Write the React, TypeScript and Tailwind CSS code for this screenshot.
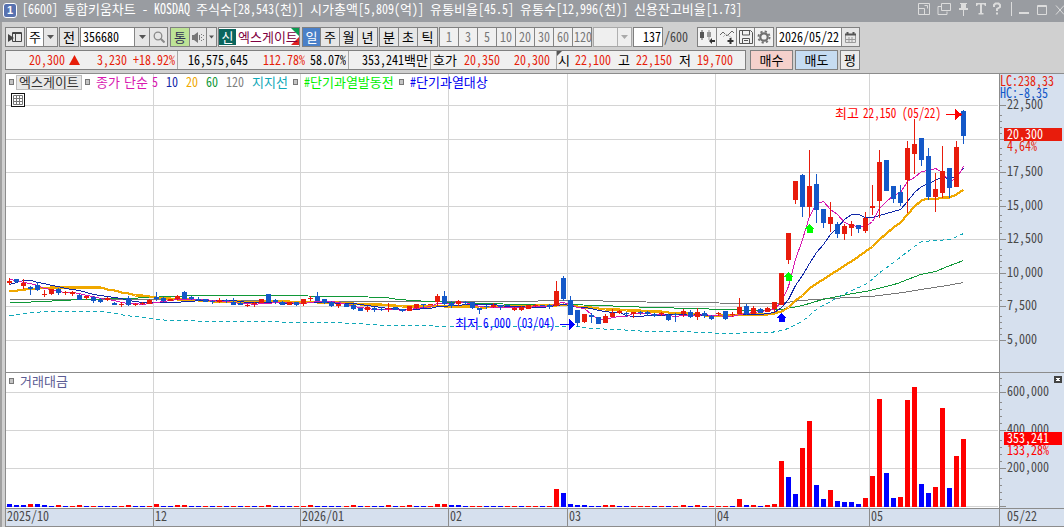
import type { ReactNode } from "react";
import { twMerge } from "tailwind-merge";

type Candle = [up: number, top: number, bottom: number, high: number, low: number];
type Point = [x: number, y: number];

// body top/bottom and wick high/low, in chart pixels
const CANDLES: Candle[] = [
    [1, 281, 283, 278, 285], [0, 279, 282, 279, 283], [1, 283, 286, 279, 289], [0, 287, 289, 286, 295],
    [0, 285, 290, 282, 291], [1, 294, 295, 290, 297], [1, 289, 294, 289, 295], [0, 289, 293, 288, 295],
    [1, 292, 293, 291, 295], [1, 292, 294, 291, 296], [0, 295, 300, 294, 300], [1, 296, 298, 296, 300],
    [0, 297, 301, 296, 303], [0, 300, 302, 298, 303], [1, 298, 300, 297, 301], [0, 303, 305, 302, 305],
    [1, 304, 305, 302, 307], [0, 298, 305, 296, 306], [1, 304, 305, 303, 306], [1, 303, 304, 302, 305],
    [1, 300, 304, 299, 304], [0, 297, 299, 292, 301], [0, 298, 301, 297, 302], [1, 299, 301, 299, 301],
    [1, 296, 299, 295, 300], [0, 292, 299, 291, 299], [0, 297, 299, 296, 300], [0, 299, 300, 297, 301],
    [0, 299, 302, 299, 302], [0, 301, 302, 300, 304], [1, 300, 302, 298, 303], [0, 300, 301, 299, 303],
    [0, 302, 305, 298, 305], [0, 303, 305, 302, 305], [1, 305, 306, 304, 307], [1, 303, 304, 302, 307],
    [1, 299, 303, 299, 303], [0, 294, 302, 294, 302], [0, 300, 302, 299, 304], [0, 302, 305, 301, 305],
    [1, 302, 305, 302, 305], [0, 302, 305, 302, 306], [1, 299, 304, 299, 306], [1, 298, 299, 296, 301],
    [0, 296, 301, 292, 301], [0, 299, 303, 299, 304], [0, 302, 306, 301, 307], [1, 304, 306, 304, 308],
    [0, 304, 307, 304, 307], [0, 305, 309, 304, 310], [0, 308, 311, 308, 311], [1, 307, 310, 306, 312],
    [0, 308, 310, 307, 312], [0, 309, 310, 307, 311], [1, 308, 309, 303, 312], [0, 307, 310, 307, 310],
    [0, 309, 311, 309, 312], [1, 306, 311, 306, 311], [1, 304, 308, 304, 309], [0, 304, 305, 304, 308],
    [1, 304, 305, 304, 305], [1, 296, 302, 294, 306], [0, 296, 304, 291, 305], [0, 303, 306, 301, 308],
    [1, 301, 304, 300, 306], [0, 302, 303, 301, 305], [0, 302, 308, 302, 309], [0, 308, 310, 308, 314],
    [0, 306, 307, 305, 309], [1, 305, 307, 303, 308], [0, 305, 307, 305, 310], [0, 305, 306, 305, 306],
    [1, 308, 310, 307, 311], [1, 307, 310, 306, 311], [1, 305, 309, 305, 309], [1, 305, 306, 304, 307],
    [0, 305, 306, 305, 306], [0, 305, 307, 304, 309], [1, 291, 306, 281, 306], [0, 278, 299, 276, 301],
    [0, 300, 315, 296, 315], [0, 310, 323, 310, 327], [1, 314, 322, 314, 323], [0, 315, 317, 313, 323],
    [0, 317, 324, 317, 324], [1, 316, 323, 314, 323], [1, 313, 317, 309, 317], [1, 311, 313, 310, 314],
    [0, 313, 314, 312, 317], [1, 312, 314, 312, 318], [0, 312, 313, 311, 315], [0, 312, 314, 311, 316],
    [0, 314, 316, 313, 317], [1, 313, 314, 312, 316], [0, 315, 320, 314, 321], [0, 314, 315, 313, 322],
    [1, 311, 314, 309, 317], [0, 312, 317, 310, 318], [1, 312, 317, 308, 320], [0, 313, 316, 311, 318],
    [0, 316, 319, 315, 320], [1, 313, 314, 312, 316], [0, 311, 319, 311, 320], [1, 314, 315, 312, 317],
    [1, 307, 314, 298, 314], [0, 306, 314, 304, 315], [1, 308, 314, 306, 314], [0, 309, 313, 308, 313],
    [1, 308, 312, 307, 312], [1, 302, 309, 302, 312], [1, 273, 305, 273, 305], [1, 233, 260, 233, 264],
    [1, 181, 200, 181, 204], [0, 175, 207, 174, 217], [1, 186, 207, 150, 217], [0, 184, 210, 174, 223],
    [0, 209, 223, 209, 228], [1, 217, 224, 202, 232], [0, 224, 234, 222, 238], [1, 226, 234, 224, 240],
    [1, 224, 228, 221, 236], [0, 225, 229, 225, 233], [1, 218, 231, 212, 233], [1, 206, 208, 185, 215],
    [1, 162, 201, 150, 218], [0, 160, 191, 160, 191], [0, 186, 199, 186, 203], [0, 192, 203, 185, 206],
    [1, 148, 180, 141, 213], [1, 144, 154, 119, 174], [0, 138, 160, 138, 166], [0, 156, 197, 148, 200],
    [1, 189, 197, 173, 212], [1, 171, 193, 146, 198], [0, 168, 188, 168, 198], [1, 147, 187, 141, 187],
    [0, 111, 136, 110, 144],
];

// r = red bar, b = blue bar, followed by its height
const VOLUMES = (
    "b3 b2 b2 r3 b3 b2 b1 r2 b1 r1 r2 b1 r1 b1 b1 b1 r1 r2 b1 b1 r1 r3 b1 b1 r2 r2 b1 b1 r1 b1 r1 b1 r1 b1 r1 b1 " +
    "r1 r2 b1 b1 b1 r1 r1 r2 b1 b1 b1 b1 r1 r2 b1 r1 b1 b1 r2 b1 r1 r2 b1 b1 r1 r3 r3 b2 b2 b1 r1 r1 b1 b1 b1 r1 " +
    "r1 b1 r1 r1 b1 r1 r18 b14 b3 b2 b2 b1 b1 r2 r2 b1 b1 r1 r1 r1 b1 r1 b1 r1 r2 b1 r2 b1 r1 r1 r1 b1 r8 b2 r2 " +
    "b1 r2 r3 r46 b30 b13 r59 r86 b22 b8 r17 b6 b5 b5 b3 r9 r31 r108 b34 b9 r10 r107 r120 b23 b14 r20 r99 b19 r51 r68"
).split(" ").map((v) => ({ up: v[0] === "r", h: Number(v.slice(1)) }));

const V_LINES = [153, 300, 448, 567, 715, 869];
const DATES: [number, string][] = [
    [7, "2025/10"], [155, "12"], [302, "2026/01"], [450, "02"], [569, "03"], [717, "04"], [871, "05"], [1007, "05/22"],
];
const PRICES: [number, string][] = [
    [105, "22,500"], [139, ""], [172, "17,500"], [206, "15,000"], [239, "12,500"], [273, "10,000"], [306, "7,500"], [340, "5,000"],
];
const AMOUNTS: [number, string][] = [[392, "600,000"], [430, "400,000"], [468, "200,000"], [506, ""]];

const xAt = (i: number) => 9 + i * 7 + Math.floor(i / 48);
const closes = CANDLES.map(([up, top, bottom]) => (up ? top : bottom));

function average(period: number, lead: Point[]): Point[] {
    const rest = closes.slice(period - 1).map((_, k): Point => {
        const sum = closes.slice(k, k + period).reduce((a, b) => a + b, 0);
        return [xAt(k + period - 1), sum / period];
    });
    return [...lead, ...rest];
}

const MA5 = average(5, [[9, 279], [16, 280], [23, 282], [30, 283]]);
const MA10 = average(10, [[9, 284], [16, 282], [23, 280], [31, 280], [37, 282], [44, 283], [51, 285], [58, 286], [65, 288]]);
const MA20 = average(20, [[9, 291], [17, 290], [24, 289], [37, 288], [51, 287], [100, 287], [107, 289], [114, 290], [121, 292], [128, 293], [135, 295]]);
const MA60: Point[] = [
    [9, 302], [20, 302], [41, 301], [62, 300], [80, 299], [125, 298], [150, 297], [167, 296], [202, 295], [265, 295],
    [350, 296], [385, 297], [398, 299], [413, 300], [427, 301], [457, 302], [482, 303], [523, 304], [563, 304],
    [602, 305], [623, 306], [653, 307], [693, 308], [723, 309], [757, 310], [781, 309], [802, 305], [822, 299],
    [847, 294], [870, 290], [897, 283], [920, 274], [935, 271], [947, 266], [963, 260],
];
const MA120: Point[] = [
    [9, 299], [167, 299], [290, 301], [523, 301], [553, 300], [602, 300], [603, 301], [687, 302], [750, 303],
    [780, 303], [800, 300], [830, 298], [870, 296], [903, 292], [920, 289], [947, 285], [963, 282],
];
const SUPPORT: Point[] = [
    [9, 315], [17, 314], [30, 312], [50, 311], [100, 311], [110, 312], [125, 315], [143, 317], [157, 319], [170, 320],
    [225, 321], [330, 322], [357, 323], [387, 325], [423, 325], [447, 326], [577, 326], [590, 328], [617, 329],
    [647, 331], [683, 331], [700, 332], [723, 333], [757, 332], [770, 332], [782, 330], [790, 327], [803, 320],
    [817, 308], [830, 301], [847, 292], [867, 283], [878, 273], [893, 262], [910, 249], [921, 241], [950, 239], [963, 233],
];

const toPoints = (pts: Point[]) => pts.map(([x, y]) => `${x + 0.5},${Math.round(y) + 0.5}`).join(" ");

const isWide = (s: string) => /[\uac00-\ud7a3]/.test(s);

// Fixed cell text: 12px for a Hangul syllable, 6px for anything else
function Cells({ children, className = "" }: { children: string; className?: string }) {
    const runs = children.match(/[\uac00-\ud7a3]+|[^\uac00-\ud7a3]+/g) ?? [];
    return (
        <span
            className={`inline-flex h-[14px] shrink-0 items-center whitespace-pre font-['Noto_Sans_CJK_KR',sans-serif] leading-[14px] ${className}`}
        >
            {runs.map((run, i) =>
                isWide(run) ? (
                    <span key={i} className="text-[13px]" style={{ width: run.length * 12 }}>
                        {run}
                    </span>
                ) : (
                    <span key={i} className="mb-[2px] text-[14px] [font-feature-settings:'hwid']" style={{ width: run.length * 6 }}>
                        <span className="inline-block origin-left scale-x-[0.857]">{run}</span>
                    </span>
                )
            )}
        </span>
    );
}

type AxisTextProps = { x: number; y: number; fill?: string; width?: number; children: string };

function AxisText({ x, y, fill = "#484848", width, children }: AxisTextProps) {
    if (isWide(children)) {
        return (
            <text x={x} y={y} fill={fill} textLength={children.length * 12} className="font-['Noto_Sans_CJK_KR',sans-serif] text-[13px]">
                {children}
            </text>
        );
    }
    return (
        <text
            x={x}
            y={y}
            fill={fill}
            textLength={width ?? children.length * 6}
            lengthAdjust="spacingAndGlyphs"
            className="font-['Noto_Sans_CJK_KR',sans-serif] text-[14px] [font-feature-settings:'hwid']"
        >
            {children}
        </text>
    );
}

function Box({ className = "", children }: { className?: string; children?: ReactNode }) {
    return (
        <div className={twMerge("flex h-full shrink-0 items-center justify-center border-r border-[#858585] last:border-r-0", className)}>
            {children}
        </div>
    );
}

function Group({ className = "", children }: { className?: string; children: ReactNode }) {
    return <div className={twMerge("flex h-5 shrink-0 overflow-hidden border border-[#808080] bg-[#e6e6e6]", className)}>{children}</div>;
}

function Down({ className = "fill-[#555]" }: { className?: string }) {
    return (
        <svg width="7" height="4" viewBox="0 0 7 4" className={className}>
            <path d="M0 0h7L3.5 4z" />
        </svg>
    );
}

function TitleBar() {
    return (
        <div className="flex h-[22px] shrink-0 items-center bg-[#999ca1] text-white">
            <div className="mb-[2px] ml-[3px] flex h-[15px] w-[14px] items-center justify-center rounded-[3px] border border-white bg-[#5872b0] font-['Liberation_Sans',sans-serif] text-[11px] font-bold">
                1
            </div>
            <Cells className="mb-[4px] ml-[5px]">
                [6600] 통합키움차트 - KOSDAQ 주식수[28,543(천)] 시가총액[5,809(억)] 유통비율[45.5] 유통수[12,996(천)] 신용잔고비율[1.73]
            </Cells>
            <svg width="150" height="22" viewBox="914 0 150 22" className="ml-auto shrink-0" fill="none" stroke="#dcdcdc">
                <path d="M918.5 3.500h11v11h-11zM918.5 8.500h6v6M924.500 5.500h3v3" />
                <path d="M941.500 3.500h9v7h-9zM941 6.500h-3v8h9v-3" />
                <path d="M960 3h7v1h-1v4h2v2h-4v6h-1v-6h-4V8h2V4h-1z" fill="#dcdcdc" stroke="none" />
                <path d="M976 3h10v3h-1l-1-1.500h-2V13h1.500v1.500h-5V13H980V4.500h-2L977 6h-1z" fill="#dcdcdc" stroke="none" />
                <path d="M994 7V5l1.500-1.500h3L1000 5v2l-3 2v2M997 12.500v2" strokeWidth="2" />
                <path d="M1011.500 2v14" />
                <path d="M1019 13h10" strokeWidth="2" />
                <path d="M1037.500 5.500h9v9h-9zM1037 6.500h10" />
                <path d="M1056 5.500l8 9M1056 14.500l8-9" />
            </svg>
        </div>
    );
}

function Toolbar() {
    return (
        <div className="ml-[5px] mt-[5px] flex h-5 shrink-0 text-black">
            <Group className="w-5 items-center justify-center">
                <svg width="15" height="14" fill="none" stroke="#444">
                    <path d="M4.500 2.500h9v9h-9zM4 3.500h10M7.500 3v9" />
                    <path d="M0 4l6 4-6 4z" fill="#444" stroke="none" />
                </svg>
            </Group>
            <Group className="ml-px w-8">
                <Box className="w-[17px] bg-white"><Cells>주</Cells></Box>
                <Box className="w-[13px]"><Down /></Box>
            </Group>
            <Group className="ml-px w-5 items-center justify-center"><Cells>전</Cells></Group>
            <Group className="ml-px w-[88px]">
                <Box className="w-[54px] justify-start bg-white pl-[2px]"><Cells>356680</Cells></Box>
                <Box className="w-[15px]"><Down /></Box>
                <Box className="w-[17px]">
                    <svg width="12" height="12" fill="none" stroke="#8a8a8a">
                        <circle cx="5" cy="5" r="3.800" strokeWidth="1.300" />
                        <path d="M7.700 7.700L11.500 11.500" strokeWidth="2" />
                    </svg>
                </Box>
            </Group>
            <Group className="ml-[2px] w-[47px]">
                <Box className="w-[19px] bg-[#bde396] text-[#335]"><Cells>통</Cells></Box>
                <Box className="w-[17px]">
                    <svg width="12" height="11" fill="#777">
                        <path d="M0 3h2l4-3v11L2 8H0z" />
                        <path d="M7 3h1v5H7zM9 2h1v1H9zM9 5h1v1H9zM9 8h1v1H9zM11 3h1v1h-1zM11 7h1v1h-1z" />
                    </svg>
                </Box>
                <Box className="w-[9px]"><Down className="w-[5px] fill-[#555]" /></Box>
            </Group>
            <Group className="relative ml-px w-[82px] items-center bg-white">
                <span className="mr-[2px] flex h-4 w-[17px] shrink-0 items-center justify-center bg-[#0a665e] text-white"><Cells>신</Cells></span>
                <svg width="8" height="17" className="absolute right-0 top-0">
                    <path d="M0 0h8v8z" fill="#0a9a50" />
                    <path d="M8 9v8H0z" fill="#e02020" />
                </svg>
                <Cells className="relative text-[#800040]">엑스게이트</Cells>
            </Group>
            <Group className="ml-[2px] w-[76px]">
                <Box className="w-[18px] bg-[#4a80c8] text-white"><Cells>일</Cells></Box>
                <Box className="w-[19px]"><Cells>주</Cells></Box>
                <Box className="w-[18px]"><Cells>월</Cells></Box>
                <Box className="w-[19px]"><Cells>년</Cells></Box>
            </Group>
            <Group className="ml-px w-[59px]">
                <Box className="w-[19px]"><Cells>분</Cells></Box>
                <Box className="w-[19px]"><Cells>초</Cells></Box>
                <Box className="w-[19px]"><Cells>틱</Cells></Box>
            </Group>
            <Group className="ml-px w-[153px] bg-[#f0f0f0] text-[#777]">
                {["1", "3", "5", "10", "20", "30", "60", "120"].map((m) => (
                    <Box key={m} className="w-[19px]"><Cells>{m}</Cells></Box>
                ))}
            </Group>
            <Group className="ml-px w-[39px] border-[#a8a8a8] bg-[#efefef]">
                <Box className="w-6 border-[#b0b0b0]" />
                <Box className="w-[13px]"><Down className="fill-[#aaa]" /></Box>
            </Group>
            <Group className="ml-px w-[30px] items-center justify-end bg-white pr-px"><Cells>137</Cells></Group>
            <div className="flex w-[34px] items-center pl-px text-[#444]"><Cells>/600</Cells></div>
            <Group className="w-[77px] bg-[#f2f2f2]">
                <Box className="w-[19px]">
                    <svg width="16" height="16" fill="#555">
                        <path d="M1 3h4v6H1zM2.500 1h1v10h-1z" />
                        <path d="M8 3h4v5H8zM9.500 1h1v10h-1z" fill="#999" />
                        <path d="M10 12l3-3v2h3v2h-3v2z" fill="#333" />
                    </svg>
                </Box>
                <Box className="w-[20px]">
                    <svg width="16" height="16" fill="none" stroke="#666">
                        <path d="M1 6l3-3 4 4 5-5 2 2" />
                        <path d="M4 8l3-3 6 4" stroke="#bbb" />
                        <path d="M11.500 9v6M8.500 12h6" stroke="#333" strokeWidth="2" />
                    </svg>
                </Box>
                <Box className="w-[18px]">
                    <svg width="14" height="14" fill="none" stroke="#555">
                        <path d="M.5.5h11l2 2v11H.500zM3.500 1v4h7V1M3.500 13V8.500h7V13M5 10.500h4" />
                    </svg>
                </Box>
                <Box className="w-[18px]">
                    <svg width="14" height="14" fill="none" stroke="#707070">
                        <circle cx="7" cy="7" r="3.700" strokeWidth="2.200" />
                        <circle cx="7" cy="7" r="5.600" strokeWidth="1.800" strokeDasharray="2.200 2.200" />
                    </svg>
                </Box>
            </Group>
            <Group className="ml-[2px] w-[84px]">
                <Box className="w-[65px] bg-white"><Cells>2026/05/22</Cells></Box>
                <Box className="w-[17px]">
                    <svg width="11" height="11" fill="none" stroke="#555">
                        <path d="M.5 2.500h10v8H.500zM4 5v5M7 5v5M1 7.500h9" stroke="#999" />
                        <path d="M0 2.500h11M2.500 0v2M8.500 0v2" strokeWidth="2" />
                    </svg>
                </Box>
            </Group>
        </div>
    );
}

function Quote() {
    return (
        <div className="ml-[5px] mt-[3px] flex h-5 shrink-0 text-black">
            <div className="flex w-[741px] shrink-0 items-center border border-[#808080] bg-[#f0f0f0] text-[#e61e0a]">
                <div className="flex h-full w-[172px] shrink-0 items-center border-r border-[#a8a8a8] pl-[23px]">
                    <Cells>20,300</Cells>
                    <svg width="11" height="10" className="ml-1 fill-[#e61e0a]">
                        <path d="M5.500 0L11 10H0z" />
                    </svg>
                    <Cells className="ml-[17px]">3,230</Cells>
                    <Cells className="ml-[6px]">+18.92%</Cells>
                </div>
                <div className="flex h-full w-[171px] shrink-0 items-center border-r border-[#a8a8a8] pl-[10px]">
                    <Cells className="text-black">16,575,645</Cells>
                    <Cells className="ml-[15px]">112.78%</Cells>
                    <Cells className="ml-[5px] text-black">58.07%</Cells>
                </div>
                <div className="flex h-full w-[82px] shrink-0 items-center border-r border-[#a8a8a8] pl-[13px] text-black">
                    <Cells>353,241백만</Cells>
                </div>
                <div className="flex h-full w-[126px] shrink-0 items-center border-r border-[#a8a8a8] pl-[2px]">
                    <Cells className="text-black">호가</Cells>
                    <Cells className="ml-[7px]">20,350</Cells>
                    <Cells className="ml-[14px]">20,300</Cells>
                </div>
                <div className="relative flex h-full items-center pl-px">
                    <svg width="5" height="5" className="absolute left-0 top-0 fill-[#555]">
                        <path d="M0 0h5L0 5z" />
                    </svg>
                    <Cells className="text-black">시</Cells>
                    <Cells className="ml-[5px]">22,100</Cells>
                    <Cells className="ml-[7px] text-black">고</Cells>
                    <Cells className="ml-[6px]">22,150</Cells>
                    <Cells className="ml-[7px] text-black">저</Cells>
                    <Cells className="ml-[6px]">19,700</Cells>
                </div>
            </div>
            <Group className="ml-1 w-[43px] items-center justify-center bg-[#f5d0cb]"><Cells>매수</Cells></Group>
            <Group className="ml-[2px] w-[43px] items-center justify-center bg-[#c6dcf2]"><Cells>매도</Cells></Group>
            <Group className="ml-[2px] w-5 items-center justify-center bg-[#ececec]"><Cells>평</Cells></Group>
        </div>
    );
}

function Marker({ className = "" }: { className?: string }) {
    return <span className={`h-[6px] w-[5px] shrink-0 border border-[#777] bg-[#c4c4c4] ${className}`} />;
}

function Legend() {
    return (
        <div className="absolute left-1 top-px flex h-[16px] items-center">
            <Marker />
            <span className="ml-[2px] flex h-[15px] w-[66px] items-center justify-center border border-[#bbb] bg-[#e8e8e8] text-[#333]">
                <Cells>엑스게이트</Cells>
            </span>
            <Marker className="ml-[3px]" />
            <Cells className="ml-[6px] text-[#d818b0]">종가</Cells>
            <Cells className="ml-[4px] text-[#d818b0]">단순</Cells>
            <Cells className="ml-[4px] text-[#d818b0]">5</Cells>
            <Cells className="ml-[8px] text-[#1028a8]">10</Cells>
            <Cells className="ml-[8px] text-[#f0a800]">20</Cells>
            <Cells className="ml-[8px] text-[#109838]">60</Cells>
            <Cells className="ml-[8px] text-[#808080]">120</Cells>
            <Cells className="ml-[8px] text-[#10a8b8]">지지선</Cells>
            <Marker className="ml-[5px]" />
            <Cells className="ml-[6px] text-[#00f000]">#단기과열발동전</Cells>
            <Marker className="ml-[5px]" />
            <Cells className="ml-[6px] text-[#0000f0]">#단기과열대상</Cells>
        </div>
    );
}

function UpArrow({ x, y, fill }: { x: number; y: number; fill: string }) {
    return <path d={`M${x + 0.5} ${y}l5 5h-2v4h-6v-4h-2z`} fill={fill} />;
}

function Chart() {
    return (
        <svg width="1059" height="454" viewBox="5 73 1059 454" className="block" shapeRendering="crispEdges">
            <rect x="5" y="73" width="994" height="436" fill="#fff" />
            <rect x="1000" y="74" width="64" height="453" fill="#d6e0ee" />
            <rect x="5" y="509" width="994" height="17" fill="#d6e0ee" />

            <g fill="#d4d4d4">
                {V_LINES.map((x) => <rect key={x} x={x} y="74" width="1" height="434" />)}
                {[...PRICES, ...AMOUNTS].map(([y]) => <rect key={y} x="6" y={y} width="992" height="1" />)}
            </g>

            <g fill="none">
                <polyline points={toPoints(MA120)} stroke="#777" />
                <polyline points={toPoints(MA60)} stroke="#109838" />
                <polyline points={toPoints(SUPPORT)} stroke="#10a8b8" strokeDasharray="4 3" />
                <polyline points={toPoints(MA20)} stroke="#f0a800" strokeWidth="2.2" />
                <polyline points={toPoints(MA10)} stroke="#1028a8" />
                <polyline points={toPoints(MA5)} stroke="#d818b0" />
            </g>

            {CANDLES.map(([up, top, bottom, high, low], i) => (
                <g key={i} fill={up ? "#e81c0c" : "#1458c8"}>
                    <rect x={xAt(i)} y={high} width="1" height={low - high} />
                    <rect x={xAt(i) - 2} y={top} width="5" height={Math.max(bottom - top, 1)} />
                </g>
            ))}
            {VOLUMES.map(({ up, h }, i) => (
                <rect key={i} x={xAt(i) - 2} y={507 - h} width="5" height={h} fill={up ? "#f00" : "#00f"} />
            ))}

            <UpArrow x={788} y={272} fill="#0f0" />
            <UpArrow x={809} y={224} fill="#0f0" />
            <UpArrow x={781} y={313} fill="#00f" />

            <AxisText x={835} y={118} fill="#f00">최고</AxisText>
            <AxisText x={863} y={118} width={78} fill="#f00">22,150 (05/22)</AxisText>
            <path d="M946 114h9v-5l7 5.500-7 5.500v-5h-9z" fill="#f00" />
            <AxisText x={455} y={328} fill="#00f">최저</AxisText>
            <AxisText x={483} y={328} width={72} fill="#00f">6,000 (03/04)</AxisText>
            <path d="M560 324h9v-5l6 5.500-6 5.500v-5h-9z" fill="#00f" />

            <g fill="#8c8c8c">
                <rect x="5" y="73" width="1059" height="1" />
                <rect x="5" y="73" width="1" height="454" />
                <rect x="999" y="73" width="1" height="454" />
                <rect x="5" y="372" width="1059" height="1" />
                <rect x="5" y="508" width="1059" height="1" />
                <rect x="5" y="526" width="1059" height="1" />
                {V_LINES.map((x) => <rect key={x} x={x} y="508" width="1" height="18" />)}
                {[...PRICES, ...AMOUNTS].map(([y]) => <rect key={y} x="1000" y={y} width="6" height="1" />)}
                {PRICES.slice(1).flatMap(([y]) => [6, 12, 18, 24].map((d) => <rect key={y - d} x="1000" y={y - d} width="2" height="1" />))}
                {AMOUNTS.flatMap(([y]) => [7, 14, 21, 28].map((d) => y - d).filter((t) => t > 376).map((t) => (
                    <rect key={t} x="1000" y={t} width="2" height="1" />
                )))}
            </g>

            {PRICES.map(([y, label]) => label && <AxisText key={y} x={1007} y={y + 4}>{label}</AxisText>)}
            {AMOUNTS.map(([y, label]) => label && <AxisText key={y} x={1007} y={y + 4}>{label}</AxisText>)}
            {DATES.map(([x, label]) => <AxisText key={x} x={x} y={521}>{label}</AxisText>)}

            <rect x="1000" y="74" width="64" height="25" fill="#d6e0ee" />
            <AxisText x={1000} y={86} fill="#e61e0a">LC:238,33</AxisText>
            <AxisText x={1000} y={98} fill="#1458c8">HC:-8,35</AxisText>

            <rect x="1004" y="128" width="58" height="13" fill="#e81c0c" />
            <AxisText x={1007} y={139} fill="#fff">20,300</AxisText>
            <AxisText x={1007} y={151} fill="#e61e0a">4,64%</AxisText>
            <rect x="1004" y="432" width="58" height="13" fill="#f00" />
            <AxisText x={1007} y={443} fill="#fff">353,241</AxisText>
            <AxisText x={1007} y={455} fill="#f00">133,28%</AxisText>

            <rect x="1054" y="376" width="8" height="7" fill="#444" />
            <path d="M1056.500 378l3 3M1059.500 378l-3 3" stroke="#fff" />
            <rect x="9.500" y="378.500" width="4" height="5" fill="#c4c4c4" stroke="#777" />
            <AxisText x={20} y={386} fill="#5c5c94">거래대금</AxisText>
        </svg>
    );
}

export default function App() {
    return (
        <div className="flex h-[527px] w-[1064px] flex-col overflow-hidden bg-[#d0d0d0]">
            <TitleBar />
            <div className="flex min-h-0 flex-1 flex-col border-l-2 border-[#a0a0a0]">
                <div className="-ml-[2px] flex flex-col">
                    <Toolbar />
                    <Quote />
                    <div className="relative ml-[5px] mt-[3px]">
                        <Chart />
                        <Legend />
                        <svg width="14" height="14" className="absolute left-[6px] top-5" fill="none" stroke="#111">
                            <rect x=".5" y=".5" width="13" height="13" fill="#fff" />
                            <path d="M2.500 2.500h9v9h-9zM3 5.500h8M3 8.500h8M5.500 3v8M8.500 3v8" stroke="#777" />
                        </svg>
                    </div>
                </div>
            </div>
        </div>
    );
}
